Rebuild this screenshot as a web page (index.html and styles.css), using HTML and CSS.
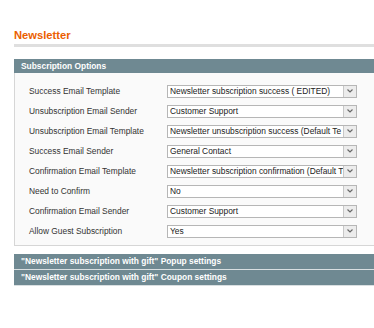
FILE: index.html
```html
<!DOCTYPE html>
<html lang="en">
<head>
    <meta charset="UTF-8">
    <meta name="viewport" content="width=device-width, initial-scale=1.0">
    <title>Newsletter</title>
    <link rel="stylesheet" href="styles.css">
</head>
<body>
    <div class="page">
        <h3 class="page-title">Newsletter</h3>

        <div class="section">
            <div class="section-head">Subscription Options</div>
            <div class="section-body">
                <div class="row">
                    <label class="label">Success Email Template</label>
                    <div class="select"><span class="value">Newsletter subscription success ( EDITED)</span><span class="arrow"><svg width="6" height="4" viewBox="0 0 6 4"><path d="M0.5 0.5 L3 3 L5.5 0.5" fill="none" stroke="#6a6a6a" stroke-width="1.2"/></svg></span></div>
                </div>
                <div class="row">
                    <label class="label">Unsubscription Email Sender</label>
                    <div class="select"><span class="value">Customer Support</span><span class="arrow"><svg width="6" height="4" viewBox="0 0 6 4"><path d="M0.5 0.5 L3 3 L5.5 0.5" fill="none" stroke="#6a6a6a" stroke-width="1.2"/></svg></span></div>
                </div>
                <div class="row">
                    <label class="label">Unsubscription Email Template</label>
                    <div class="select"><span class="value">Newsletter unsubscription success (Default Te</span><span class="arrow"><svg width="6" height="4" viewBox="0 0 6 4"><path d="M0.5 0.5 L3 3 L5.5 0.5" fill="none" stroke="#6a6a6a" stroke-width="1.2"/></svg></span></div>
                </div>
                <div class="row">
                    <label class="label">Success Email Sender</label>
                    <div class="select"><span class="value">General Contact</span><span class="arrow"><svg width="6" height="4" viewBox="0 0 6 4"><path d="M0.5 0.5 L3 3 L5.5 0.5" fill="none" stroke="#6a6a6a" stroke-width="1.2"/></svg></span></div>
                </div>
                <div class="row">
                    <label class="label">Confirmation Email Template</label>
                    <div class="select"><span class="value">Newsletter subscription confirmation (Default T</span><span class="arrow"><svg width="6" height="4" viewBox="0 0 6 4"><path d="M0.5 0.5 L3 3 L5.5 0.5" fill="none" stroke="#6a6a6a" stroke-width="1.2"/></svg></span></div>
                </div>
                <div class="row">
                    <label class="label">Need to Confirm</label>
                    <div class="select"><span class="value">No</span><span class="arrow"><svg width="6" height="4" viewBox="0 0 6 4"><path d="M0.5 0.5 L3 3 L5.5 0.5" fill="none" stroke="#6a6a6a" stroke-width="1.2"/></svg></span></div>
                </div>
                <div class="row">
                    <label class="label">Confirmation Email Sender</label>
                    <div class="select"><span class="value">Customer Support</span><span class="arrow"><svg width="6" height="4" viewBox="0 0 6 4"><path d="M0.5 0.5 L3 3 L5.5 0.5" fill="none" stroke="#6a6a6a" stroke-width="1.2"/></svg></span></div>
                </div>
                <div class="row">
                    <label class="label">Allow Guest Subscription</label>
                    <div class="select"><span class="value">Yes</span><span class="arrow"><svg width="6" height="4" viewBox="0 0 6 4"><path d="M0.5 0.5 L3 3 L5.5 0.5" fill="none" stroke="#6a6a6a" stroke-width="1.2"/></svg></span></div>
                </div>
            </div>
        </div>

        <div class="collapsed">
            <div class="section-head">"Newsletter subscription with gift" Popup settings</div>
            <div class="section-head">"Newsletter subscription with gift" Coupon settings</div>
        </div>
    </div>
</body>
</html>
```

FILE: styles.css
```css
body {
    margin: 0;
    padding: 0;
    background: #fff;
    font-family: "Liberation Sans", Arial, sans-serif;
    color: #2f2f2f;
}
.page {
    padding: 28px 0 0 14px;
}
.page-title {
    margin: 0;
    padding-bottom: 2px;
    font-size: 11.2px;
    line-height: 14px;
    font-weight: bold;
    color: #eb5e00;
    border-bottom: 3px solid #dfdfdf;
}
.section {
    margin-top: 12px;
}
.section-head {
    height: 14px;
    line-height: 14px;
    padding-left: 7px;
    background-color: #6f8992;
    color: #fff;
    font-size: 8.4px;
    font-weight: bold;
    white-space: nowrap;
}
.section-body {
    background-color: #fafafa;
    border-left: 1px solid #d6d6d6;
    border-bottom: 1px solid #d6d6d6;
    padding: 8px 0 4px 14px;
}
.row {
    display: flex;
    align-items: center;
    height: 20px;
}
.label {
    width: 138px;
    font-size: 8.4px;
    color: #333;
}
.select {
    display: flex;
    width: 190px;
    height: 13px;
    box-sizing: border-box;
    border: 1px solid #b6b6b6;
    background-color: #fff;
}
.value {
    flex: 1;
    overflow: hidden;
    white-space: nowrap;
    padding-left: 2px;
    font-size: 8.4px;
    line-height: 11px;
    color: #222;
}
.arrow {
    width: 12px;
    display: flex;
    align-items: center;
    justify-content: center;
    background-color: #ececec;
    border-left: 1px solid #c8c8c8;
}
.collapsed {
    margin-top: 8px;
}
.collapsed .section-head {
    height: 15px;
    line-height: 15px;
    border-bottom: 1px solid #d9dfe1;
}
```
